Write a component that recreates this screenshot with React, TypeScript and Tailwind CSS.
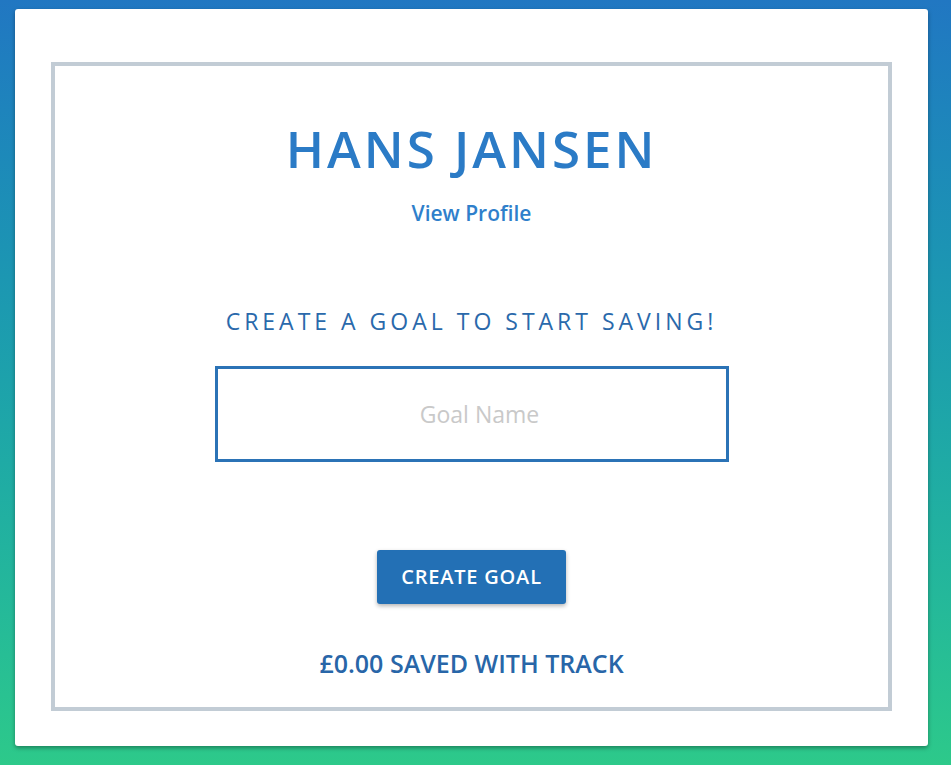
export default function App() {
  return (
    <div className="min-h-[765px] w-full bg-gradient-to-b from-[#2177c2] to-[#2dc98a] px-[15px] pt-[9px] pb-[19px] font-['Open_Sans',sans-serif]">
      <div className="rounded-[3px] bg-white px-[36px] pt-[53px] pb-[35px] shadow-[0_2px_4px_rgba(0,0,0,0.35)] w-[913px]">
        <div className="flex h-[649px] flex-col items-center border-4 border-[#c2ccd5]">
          {/* Name */}
          <h1 className="mt-[57px] text-[51px] font-semibold leading-none tracking-[3px] text-[#2b7bc6]">
            HANS JANSEN
          </h1>
          <a className="mt-[24px] text-[21px] font-semibold text-[#2f7fcb] cursor-pointer">View Profile</a>

          {/* Goal */}
          <h2 className="mt-[74px] text-[23px] font-normal tracking-[4px] text-[#2a69ab]">
            CREATE A GOAL TO START SAVING!
          </h2>
          <input
            type="text"
            placeholder="Goal Name"
            className="mt-[28px] h-[96px] w-[514px] border-[3px] border-[#2b73b6] pl-[16px] text-center text-[23px] text-gray-700 outline-none placeholder:text-[#c9c9c9]"
          />

          <button className="mt-[88px] h-[54px] w-[189px] rounded-[3px] bg-[#2370b5] text-[20px] font-semibold tracking-[0.8px] text-white shadow-[0_2px_4px_rgba(0,0,0,0.3)]">
            CREATE GOAL
          </button>

          <p className="mt-[41px] text-[25px] font-semibold text-[#2866a8]">£0.00 SAVED WITH TRACK</p>
        </div>
      </div>
    </div>
  );
}
